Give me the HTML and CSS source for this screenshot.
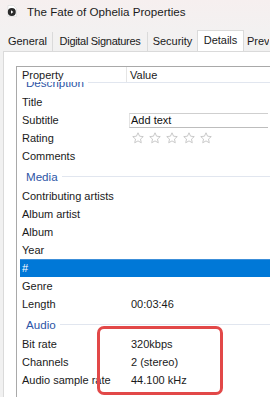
FILE: index.html
```html
<!DOCTYPE html>
<html>
<head>
<meta charset="utf-8">
<link rel="stylesheet" href="styles.css">
</head>
<body>
<div class="titlebar">
  <svg class="ficon" width="10" height="12" viewBox="0 0 10 12">
    <path d="M1 0.5h5.5l3 3v8H1z" fill="#fff" stroke="#d8d8d8" stroke-width="0.6"/>
    <circle cx="4.8" cy="7" r="4" fill="#2b2b2b"/>
    <path d="M4 5.3l2.3 1.7L4 8.7z" fill="#fff"/>
  </svg>
  <span class="title">The Fate of Ophelia Properties</span>
</div>
<div class="tabs">
  <div class="tab t-general">General</div>
  <div class="tab t-digital">Digital Signatures</div>
  <div class="tab t-security">Security</div>
  <div class="tab t-details selected">Details</div>
  <div class="tab t-prev">Prev</div>
</div>
<div class="panel">
  <div class="listbox">
    <div class="lhead">
      <div class="hcell hname">Property</div>
      <div class="hcell hvalue">Value</div>
    </div>
    <div class="lbody">
      <div class="inner">
        <div class="group"><span class="gtext">Description</span><span class="gline"></span></div>
        <div class="row"><span class="name">Title</span><span class="val"></span></div>
        <div class="row"><span class="name">Subtitle</span><span class="val"><span class="textbox">Add text</span></span></div>
        <div class="row"><span class="name">Rating</span><span class="val stars">
          <svg width="12" height="12" viewBox="0 0 12 12"><path class="star" d="M6 0.8l1.55 3.4 3.7 0.4-2.75 2.5 0.78 3.65L6 8.9 2.72 10.75 3.5 7.1 0.75 4.6l3.7-0.4z"/></svg>
          <svg width="12" height="12" viewBox="0 0 12 12"><path class="star" d="M6 0.8l1.55 3.4 3.7 0.4-2.75 2.5 0.78 3.65L6 8.9 2.72 10.75 3.5 7.1 0.75 4.6l3.7-0.4z"/></svg>
          <svg width="12" height="12" viewBox="0 0 12 12"><path class="star" d="M6 0.8l1.55 3.4 3.7 0.4-2.75 2.5 0.78 3.65L6 8.9 2.72 10.75 3.5 7.1 0.75 4.6l3.7-0.4z"/></svg>
          <svg width="12" height="12" viewBox="0 0 12 12"><path class="star" d="M6 0.8l1.55 3.4 3.7 0.4-2.75 2.5 0.78 3.65L6 8.9 2.72 10.75 3.5 7.1 0.75 4.6l3.7-0.4z"/></svg>
          <svg width="12" height="12" viewBox="0 0 12 12"><path class="star" d="M6 0.8l1.55 3.4 3.7 0.4-2.75 2.5 0.78 3.65L6 8.9 2.72 10.75 3.5 7.1 0.75 4.6l3.7-0.4z"/></svg>
        </span></div>
        <div class="row"><span class="name">Comments</span><span class="val"></span></div>
        <div class="group"><span class="gtext">Media</span><span class="gline"></span></div>
        <div class="row"><span class="name">Contributing artists</span><span class="val"></span></div>
        <div class="row"><span class="name">Album artist</span><span class="val"></span></div>
        <div class="row"><span class="name">Album</span><span class="val"></span></div>
        <div class="row"><span class="name">Year</span><span class="val"></span></div>
        <div class="row sel"><span class="name">#</span><span class="val"></span></div>
        <div class="row"><span class="name">Genre</span><span class="val"></span></div>
        <div class="row"><span class="name">Length</span><span class="val">00:03:46</span></div>
        <div class="group"><span class="gtext">Audio</span><span class="gline"></span></div>
        <div class="row"><span class="name">Bit rate</span><span class="val">320kbps</span></div>
        <div class="row"><span class="name">Channels</span><span class="val">2 (stereo)</span></div>
        <div class="row"><span class="name">Audio sample rate</span><span class="val">44.100 kHz</span></div>
      </div>
    </div>
  </div>
</div>
<div class="highlight"></div>
</body>
</html>
```
FILE: styles.css
```css
html, body {
  margin: 0;
  padding: 0;
}
body {
  width: 270px;
  height: 397px;
  overflow: hidden;
  position: relative;
  font-family: "Liberation Sans", Arial, sans-serif;
  font-size: 11px;
  color: #1a1a1a;
  background: linear-gradient(180deg, #f6efef 0px, #f3f1f1 30px, #f1f1f1 52px);
}
.titlebar {
  height: 22px;
  display: flex;
  align-items: center;
  padding-left: 7px;
  gap: 10px;
}
.ficon {
  flex: none;
  margin-top: -1px;
}
.title {
  font-size: 11.6px;
  color: #1b1b1b;
  white-space: nowrap;
}
.tabs {
  margin-top: 8px;
  height: 21px;
  display: flex;
  align-items: flex-end;
  padding-left: 3px;
  white-space: nowrap;
  overflow: hidden;
}
.tab {
  box-sizing: border-box;
  height: 19px;
  line-height: 19px;
  border-right: 1px solid #dadada;
  text-align: center;
  color: #1a1a1a;
  flex: none;
  overflow: hidden;
}
.t-general { width: 50px; }
.t-digital { width: 95px; letter-spacing: -0.3px; }
.t-security { width: 50px; }
.t-details { width: 47px; }
.t-prev { width: 25px; text-align: left; padding-left: 3px; border-right: none; }
.tab.selected {
  height: 22px;
  line-height: 19px;
  background: #fff;
  border: 1px solid #dadada;
  border-bottom: none;
  margin-bottom: -1px;
  margin-left: -1px;
  position: relative;
  z-index: 1;
}
.panel {
  box-sizing: border-box;
  margin-left: 3px;
  width: 267px;
  height: 346px;
  background: #fff;
  border-top: 1px solid #dadada;
  border-left: 1px solid #dadada;
  padding-top: 14px;
  padding-left: 12px;
}
.listbox {
  box-sizing: border-box;
  width: 254px;
  height: 331px;
  border-top: 1px solid #a9a9a9;
  border-left: 1px solid #a9a9a9;
  display: flex;
  flex-direction: column;
  overflow: hidden;
}
.lhead {
  height: 15px;
  display: flex;
  flex: none;
  background: #fff;
}
.hcell {
  line-height: 16px;
  white-space: nowrap;
}
.hname {
  box-sizing: border-box;
  width: 110px;
  padding-left: 5px;
  border-right: 1px solid #e5e5e5;
}
.hvalue {
  padding-left: 3px;
}
.lbody {
  flex: 1;
  overflow: hidden;
}
.inner {
  margin-top: -11px;
}
.group {
  height: 22px;
  display: flex;
  align-items: center;
  padding-left: 9px;
}
.gtext {
  color: #2d55a6;
  font-size: 11.6px;
  white-space: nowrap;
}
.gline {
  flex: 1;
  height: 1px;
  background: #e1e6ef;
  margin-left: 4px;
}
.row {
  height: 18px;
  margin-left: 3px;
  display: flex;
  align-items: center;
  white-space: nowrap;
}
.name {
  box-sizing: border-box;
  width: 111px;
  padding-left: 2px;
  flex: none;
}
.val {
  flex: 1;
  display: flex;
  align-items: center;
  min-width: 0;
}
.textbox {
  box-sizing: border-box;
  display: block;
  width: 100%;
  height: 15px;
  line-height: 13px;
  margin-left: -2px;
  padding-left: 1px;
  border-top: 1px solid #cfcfcf;
  border-left: 1px solid #e3e3e3;
  border-bottom: 1px solid #bdbdbd;
  color: #111;
}
.stars {
  gap: 5px;
  padding-left: 1px;
}
.star {
  fill: #fff;
  stroke: #bcbcbc;
  stroke-width: 0.8;
  stroke-linejoin: round;
}
.row.sel {
  background: #0078d7;
  color: #fff;
  box-shadow: inset 0 1px 0 #3c8fd9;
}
.highlight {
  position: absolute;
  left: 97px;
  top: 326px;
  width: 126px;
  height: 69px;
  box-sizing: border-box;
  border: 3px solid #e24848;
  border-radius: 7px;
}
```
